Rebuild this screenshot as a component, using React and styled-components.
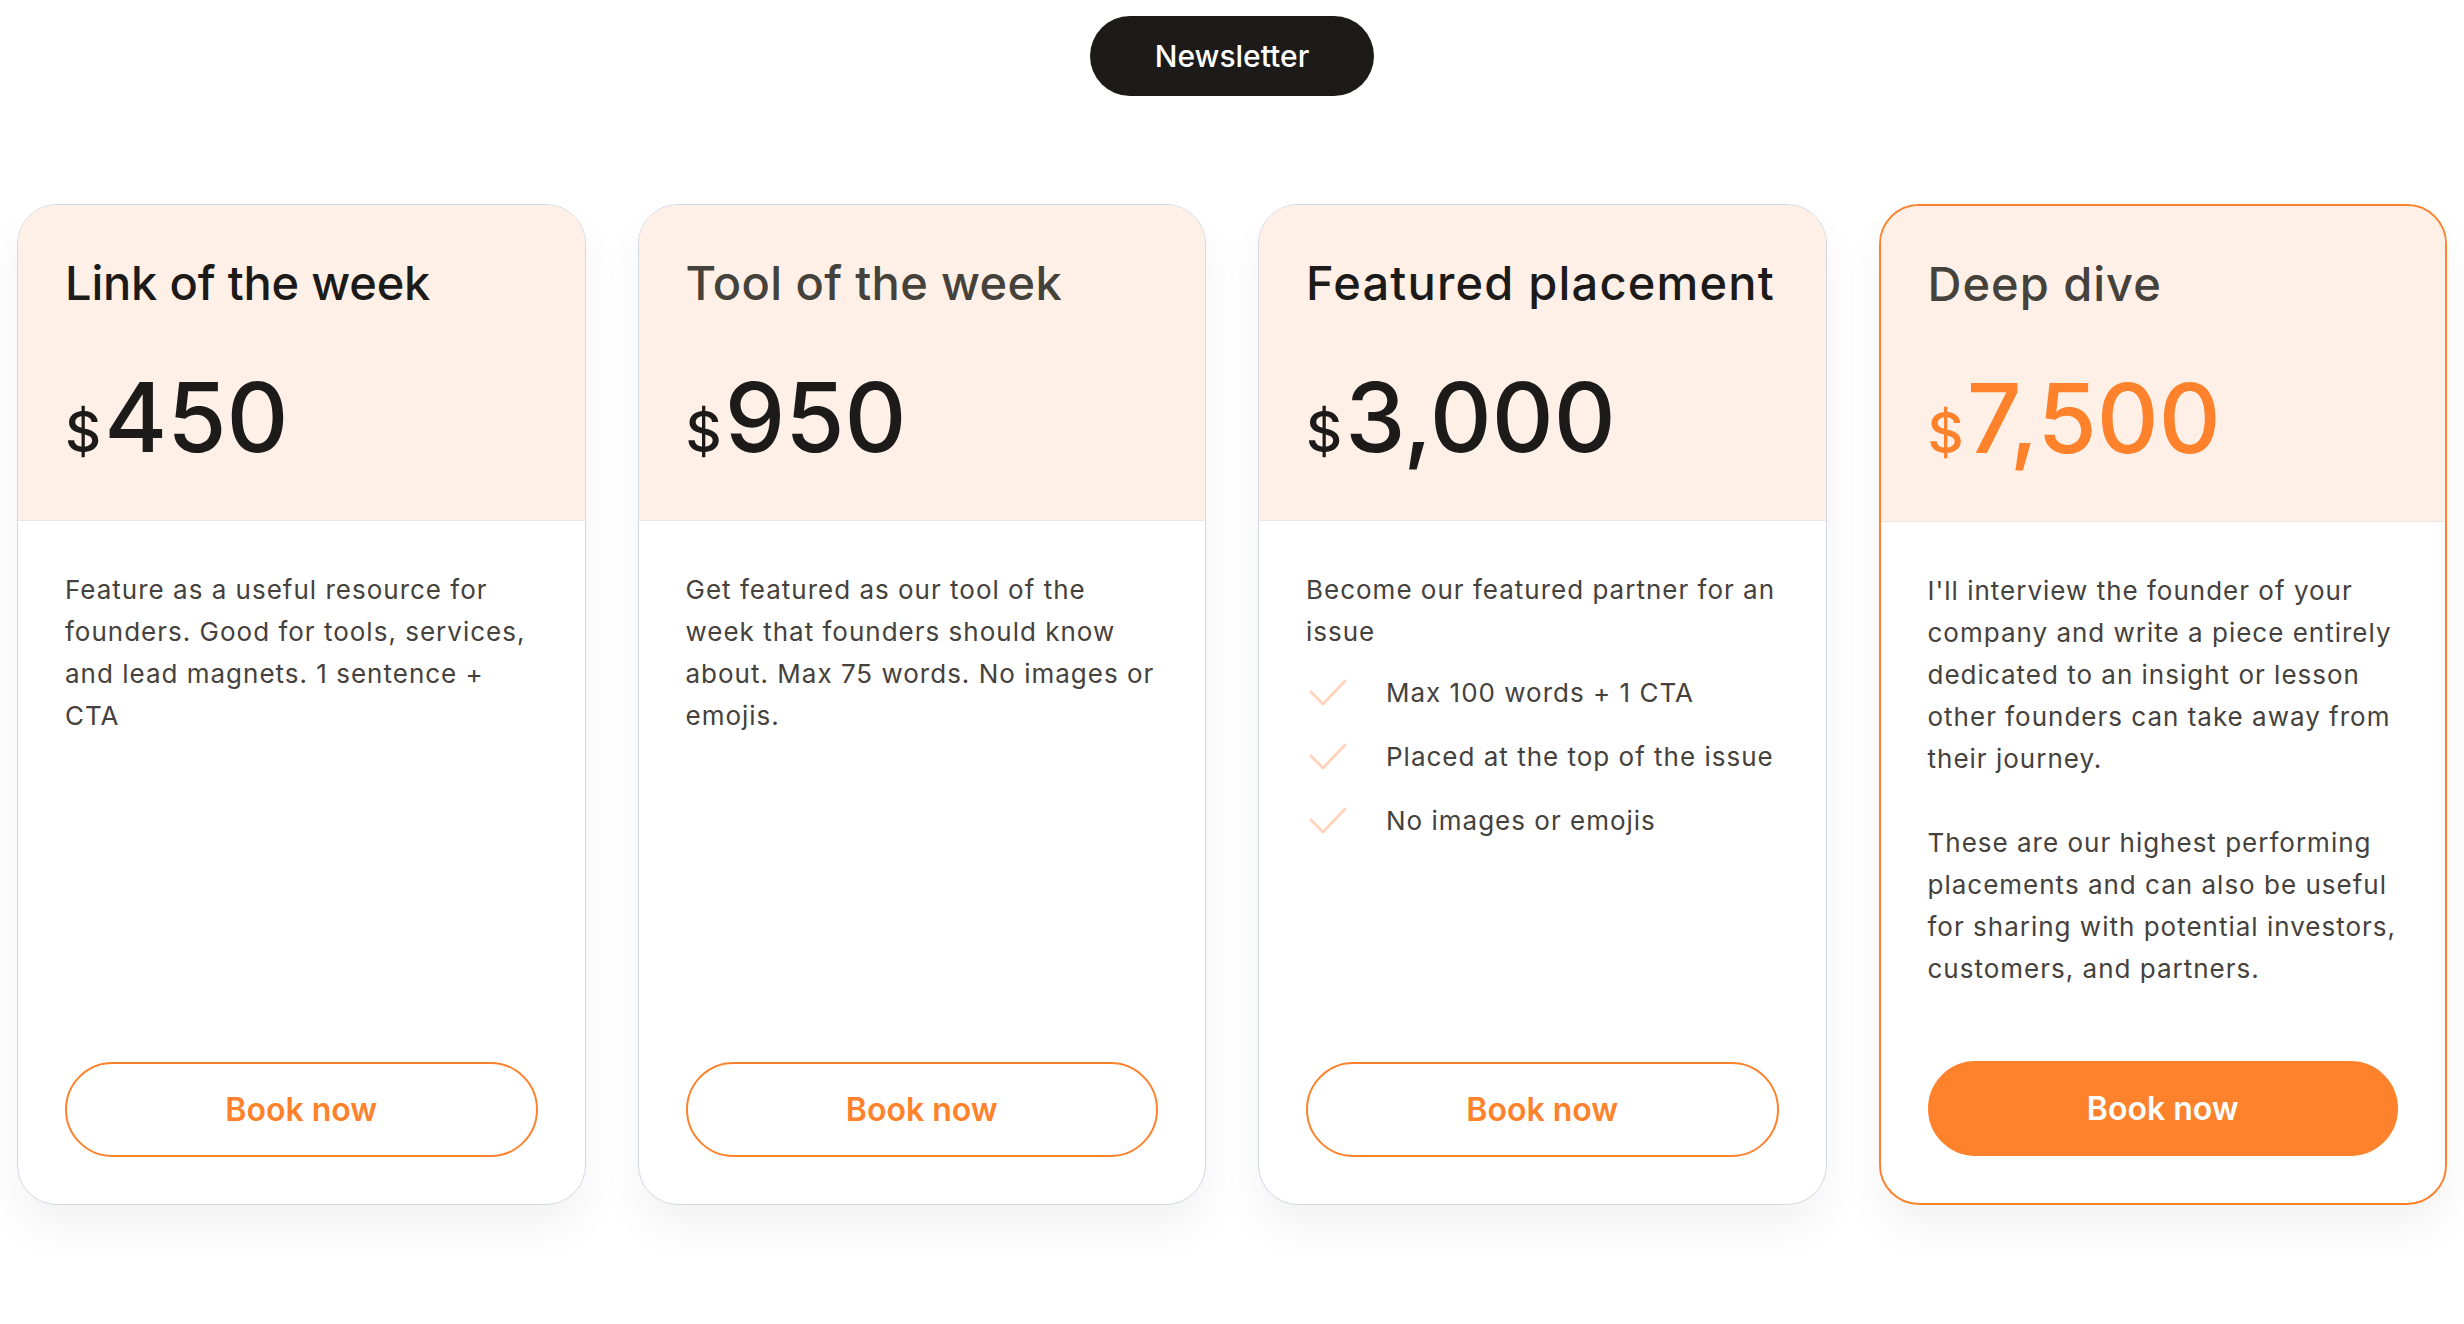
import React from "react";
import styled, { createGlobalStyle } from "styled-components";

const GlobalStyle = createGlobalStyle`
  * { box-sizing: border-box; }
  body {
    margin: 0;
    background: #ffffff;
    font-family: Inter, "Liberation Sans", sans-serif;
    color: #1c1b1a;
  }
`;

// tracking: per-title letter spacing so the headings keep their original widths
const plans = [
  {
    title: "Link of the week",
    price: "450",
    tracking: "-0.2px",
    text: ["Feature as a useful resource for founders. Good for tools, services, and lead magnets. 1 sentence + CTA"],
  },
  {
    title: "Tool of the week",
    price: "950",
    muted: true,
    tracking: "0.35px",
    text: ["Get featured as our tool of the week that founders should know about. Max 75 words. No images or emojis."],
  },
  {
    title: "Featured placement",
    price: "3,000",
    tracking: "1.2px",
    text: ["Become our featured partner for an issue"],
    perks: ["Max 100 words + 1 CTA", "Placed at the top of the issue", "No images or emojis"],
  },
  {
    title: "Deep dive",
    price: "7,500",
    muted: true,
    tracking: "1px",
    highlight: true,
    text: [
      "I'll interview the founder of your company and write a piece entirely dedicated to an insight or lesson other founders can take away from their journey.",
      "These are our highest performing placements and can also be useful for sharing with potential investors, customers, and partners.",
    ],
  },
];

function CheckIcon() {
  return (
    <svg width="42" height="28" viewBox="0 0 42 28" fill="none">
      <polyline points="5,13 17,25 39,2" stroke="#ffd6bd" strokeWidth="3" strokeLinecap="round" strokeLinejoin="round" />
    </svg>
  );
}

export default function App() {
  return (
    <Page>
      <GlobalStyle />
      <Top>
        <Pill>Newsletter</Pill>
      </Top>
      <Grid>
        {plans.map((p) => (
          <Card key={p.title} $highlight={p.highlight}>
            <Head>
              <Title $muted={p.muted} $tracking={p.tracking}>{p.title}</Title>
              <Price $highlight={p.highlight}>
                <Dollar>$</Dollar>
                {p.price}
              </Price>
            </Head>
            <Body>
              {p.text.map((t, i) => (
                <Para key={i}>{t}</Para>
              ))}
              {p.perks && (
                <Perks>
                  {p.perks.map((k) => (
                    <Perk key={k}>
                      <CheckIcon />
                      <span>{k}</span>
                    </Perk>
                  ))}
                </Perks>
              )}
              <BookButton $filled={p.highlight}>Book now</BookButton>
            </Body>
          </Card>
        ))}
      </Grid>
    </Page>
  );
}

const Page = styled.div`
  padding: 16px 17px 80px;
`;

const Top = styled.div`
  display: flex;
  justify-content: center;
`;

const Pill = styled.div`
  height: 80px;
  padding: 0 65px;
  border-radius: 40px;
  background: #1c1b1a;
  color: #ffffff;
  font-size: 30px;
  font-weight: 500;
  display: flex;
  align-items: center;
  justify-content: center;
`;

const Grid = styled.div`
  margin-top: 108px;
  display: grid;
  grid-template-columns: repeat(4, 1fr);
  gap: 52px;
`;

const Card = styled.div`
  min-height: 1001px;
  display: flex;
  flex-direction: column;
  border: ${(p) => (p.$highlight ? "2px solid #fd822b" : "1px solid #d3d8e2")};
  border-radius: 40px;
  overflow: hidden;
  background: #ffffff;
  box-shadow: 0 24px 40px rgba(20, 20, 40, 0.05);
`;

const Head = styled.div`
  background: #fef0e7;
  padding: 50px 47px 55px;
  border-bottom: 1px solid #ebe7e4;
`;

const Title = styled.h2`
  margin: 0;
  font-size: 47px;
  line-height: 1.2;
  font-weight: 500;
  white-space: nowrap;
  letter-spacing: ${(p) => p.$tracking};
  color: ${(p) => (p.$muted ? "#45413b" : "#1c1b1a")};
`;

const Price = styled.div`
  margin-top: 58px;
  font-size: 96px;
  line-height: 1;
  font-weight: 500;
  color: ${(p) => (p.$highlight ? "#fd822b" : "#1c1b1a")};
`;

const Dollar = styled.span`
  font-size: 56px;
  margin-right: 3px;
`;

const Body = styled.div`
  flex: 1;
  display: flex;
  flex-direction: column;
  padding: 48px 47px 47px;
`;

const Para = styled.p`
  margin: 0 0 42px;
  font-size: 26px;
  line-height: 42px;
  letter-spacing: 1px;
  color: #45413c;

  &:last-of-type {
    margin-bottom: 0;
  }
`;

const Perks = styled.ul`
  list-style: none;
  margin: 19px 0 0;
  padding: 0;
  display: flex;
  flex-direction: column;
  gap: 22px;
`;

const Perk = styled.li`
  display: flex;
  align-items: center;
  gap: 38px;
  font-size: 26px;
  line-height: 42px;
  letter-spacing: 1px;
  color: #45413c;
`;

const BookButton = styled.button`
  margin-top: auto;
  width: 100%;
  height: 95px;
  border-radius: 48px;
  border: 2px solid #fd822b;
  background: ${(p) => (p.$filled ? "#fd822b" : "#ffffff")};
  color: ${(p) => (p.$filled ? "#ffffff" : "#fd822b")};
  font-family: Inter, "Liberation Sans", sans-serif;
  font-size: 32px;
  font-weight: 600;
  cursor: pointer;
`;
